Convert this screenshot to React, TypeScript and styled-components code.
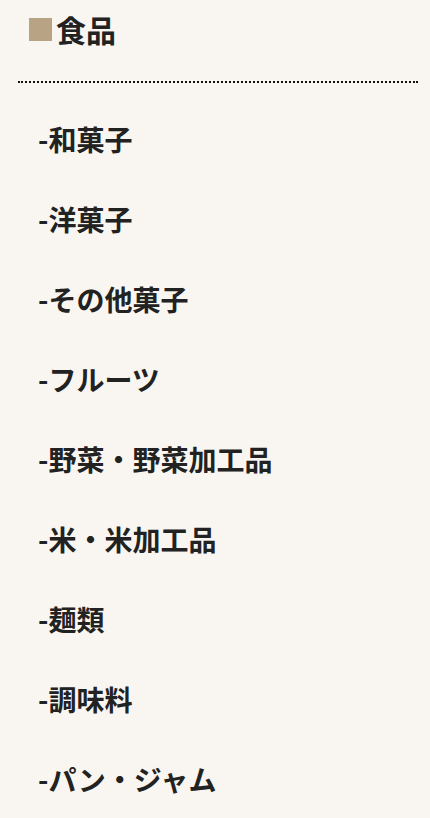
import React from "react";
import styled, { createGlobalStyle } from "styled-components";

const GlobalStyle = createGlobalStyle`
  body {
    margin: 0;
    background: #f9f6f1;
    font-family: "Noto Sans CJK JP", "Noto Sans", sans-serif;
    color: #222222;
  }
`;

const categories = [
  "和菓子",
  "洋菓子",
  "その他菓子",
  "フルーツ",
  "野菜・野菜加工品",
  "米・米加工品",
  "麺類",
  "調味料",
  "パン・ジャム",
];

const App: React.FC = () => {
  return (
    <>
      <GlobalStyle />
      <Container>
        <Heading>
          <Mark />
          食品
        </Heading>
        <CategoryList>
          {categories.map((name) => (
            <CategoryItem key={name}>-{name}</CategoryItem>
          ))}
        </CategoryList>
      </Container>
    </>
  );
};

export default App;

const Container = styled.div`
  padding: 0 12px 0 18px;
`;

const Heading = styled.h2`
  display: flex;
  align-items: center;
  margin: 0;
  padding: 11px 0 34px 11px;
  font-size: 30px;
  font-weight: 700;
  line-height: 36px;
  border-bottom: 2px dotted #111111;
`;

const Mark = styled.span`
  display: inline-block;
  width: 23px;
  height: 23px;
  margin-right: 4px;
  background: #b8a384;
`;

const CategoryList = styled.ul`
  list-style: none;
  margin: 0;
  padding: 16px 0 0 20px;
`;

const CategoryItem = styled.li`
  font-size: 28px;
  font-weight: 700;
  line-height: 80px;
  height: 80px;
`;
